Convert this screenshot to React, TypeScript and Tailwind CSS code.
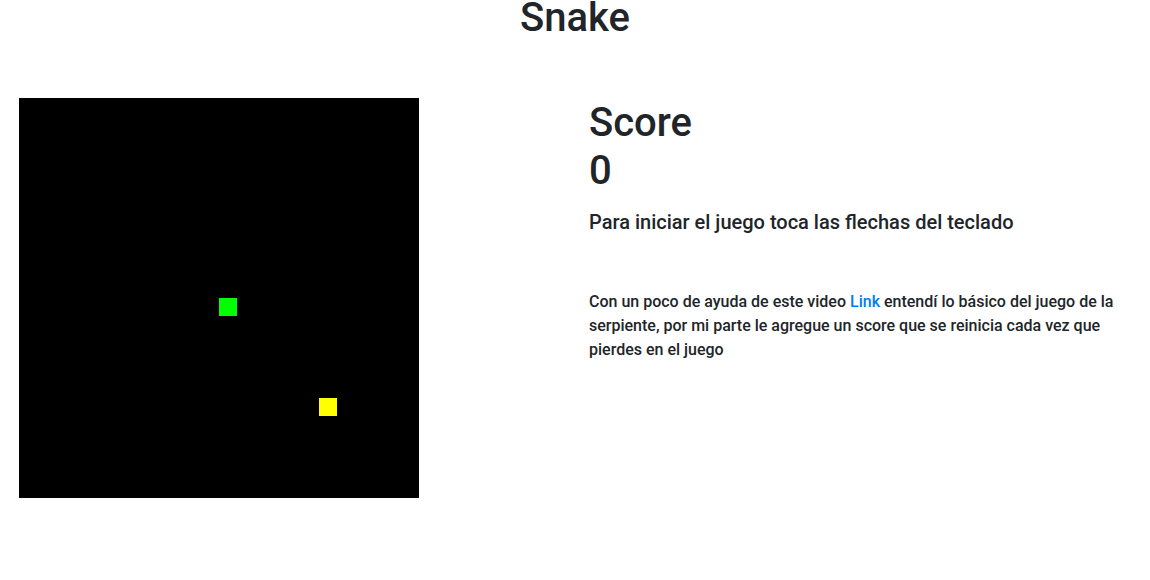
export default function App() {
  return (
    <div className="min-h-[580px] bg-white text-[#212529] font-['Roboto',sans-serif]">
      <h1 className="text-center text-[40px] font-medium leading-[36px]">Snake</h1>

      <div className="mt-[62px] flex">
        {/* game board */}
        <div className="w-[589px] pl-[19px]">
          <div className="relative h-[400px] w-[400px] bg-black">
            <div className="absolute left-[200px] top-[200px] h-[18px] w-[18px] bg-[#00ff00]" />
            <div className="absolute left-[300px] top-[300px] h-[18px] w-[18px] bg-[#ffff00]" />
          </div>
        </div>

        {/* score + info */}
        <div className="w-[546px]">
          <h1 className="pt-px text-[40px] font-medium leading-[48px]">
            Score
            <br />0
          </h1>
          <h5 className="mt-[15px] text-[20px] font-medium leading-[24px]">
            Para iniciar el juego toca las flechas del teclado
          </h5>
          <p className="mt-[56px] text-[16px] font-medium leading-[24px]">
            Con un poco de ayuda de este video{' '}
            <a href="#" className="text-[#007bff]">
              Link
            </a>{' '}
            entendí lo básico del juego de la serpiente, por mi parte le agregue un score que se reinicia cada vez que
            pierdes en el juego
          </p>
        </div>
      </div>
    </div>
  )
}
